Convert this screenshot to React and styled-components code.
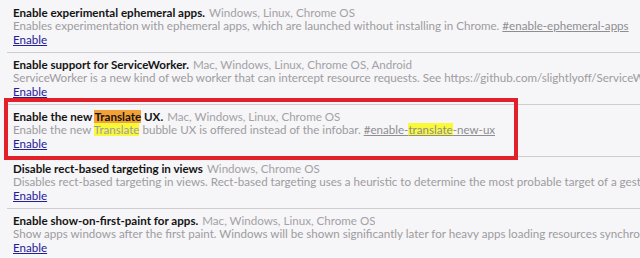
import React from "react";
import styled, { createGlobalStyle } from "styled-components";

const GlobalStyle = createGlobalStyle`
  html, body {
    margin: 0;
    padding: 0;
    background: #f6f5f7;
    overflow: hidden;
  }
  body {
    font-family: Lato, "Open Sans", sans-serif;
  }
`;

const List = styled.div`
  margin-left: 7px;
  width: 633px;
`;

const Experiment = styled.div`
  position: relative;
  display: flex;
  flex-direction: column;
  align-items: flex-start;
  height: 52px;
  padding: 5px 0 0 6px;
  box-sizing: border-box;
  border-bottom: 1px solid #cfcdd0;
  &:first-child {
    height: 53px;
    padding-top: 6px;
  }
  ${props =>
    props.marked &&
    `
    &::after {
      content: "";
      position: absolute;
      left: -3px;
      top: -7px;
      width: 506px;
      height: 54px;
      border: 4px solid #e2202a;
      pointer-events: none;
    }
  `}
`;

const Line = styled.div`
  font-size: 11.6px;
  line-height: 13px;
  white-space: nowrap;
  overflow: hidden;
  max-width: 100%;
`;

const Name = styled.span`
  font-weight: 700;
  color: #141414;
`;

const Platforms = styled.span`
  color: #a3a2a6;
  margin-left: 4px;
`;

const Description = styled(Line)`
  color: #9d9ca0;
`;

const Permalink = styled.a`
  color: #8e8d91;
  text-decoration: underline;
`;

const Mark = styled.span`
  background: ${props => (props.strong ? "#f3a036" : "#f9f93a")};
  color: ${props => (props.strong ? "#141414" : "inherit")};
`;

const EnableLink = styled.a`
  display: block;
  margin-top: 1px;
  font-size: 11.6px;
  line-height: 14px;
  color: #23209a;
  text-decoration: underline;
`;

const App = () => (
  <>
    <GlobalStyle />
    <List>
      <Experiment>
        <Line>
          <Name>Enable experimental ephemeral apps.</Name>
          <Platforms>Windows, Linux, Chrome OS</Platforms>
        </Line>
        <Description>
          Enables experimentation with ephemeral apps, which are launched
          without installing in Chrome.{" "}
          <Permalink href="#">#enable-ephemeral-apps</Permalink>
        </Description>
        <EnableLink href="#">Enable</EnableLink>
      </Experiment>
      <Experiment>
        <Line>
          <Name>Enable support for ServiceWorker.</Name>
          <Platforms>Mac, Windows, Linux, Chrome OS, Android</Platforms>
        </Line>
        <Description>
          ServiceWorker is a new kind of web worker that can intercept resource
          requests. See https://github.com/slightlyoff/ServiceWorker for more
          details.
        </Description>
        <EnableLink href="#">Enable</EnableLink>
      </Experiment>
      <Experiment marked>
        <Line>
          <Name>
            Enable the new <Mark strong>Translate</Mark> UX.
          </Name>
          <Platforms>Mac, Windows, Linux, Chrome OS</Platforms>
        </Line>
        <Description>
          Enable the new <Mark>Translate</Mark> bubble UX is offered instead of
          the infobar.{" "}
          <Permalink href="#">
            #enable-<Mark>translate</Mark>-new-ux
          </Permalink>
        </Description>
        <EnableLink href="#">Enable</EnableLink>
      </Experiment>
      <Experiment>
        <Line>
          <Name>Disable rect-based targeting in views</Name>
          <Platforms>Windows, Chrome OS</Platforms>
        </Line>
        <Description>
          Disables rect-based targeting in views. Rect-based targeting uses a
          heuristic to determine the most probable target of a gesture.
        </Description>
        <EnableLink href="#">Enable</EnableLink>
      </Experiment>
      <Experiment>
        <Line>
          <Name>Enable show-on-first-paint for apps.</Name>
          <Platforms>Mac, Windows, Linux, Chrome OS</Platforms>
        </Line>
        <Description>
          Show apps windows after the first paint. Windows will be shown
          significantly later for heavy apps loading resources synchronously.
        </Description>
        <EnableLink href="#">Enable</EnableLink>
      </Experiment>
    </List>
  </>
);

export default App;
